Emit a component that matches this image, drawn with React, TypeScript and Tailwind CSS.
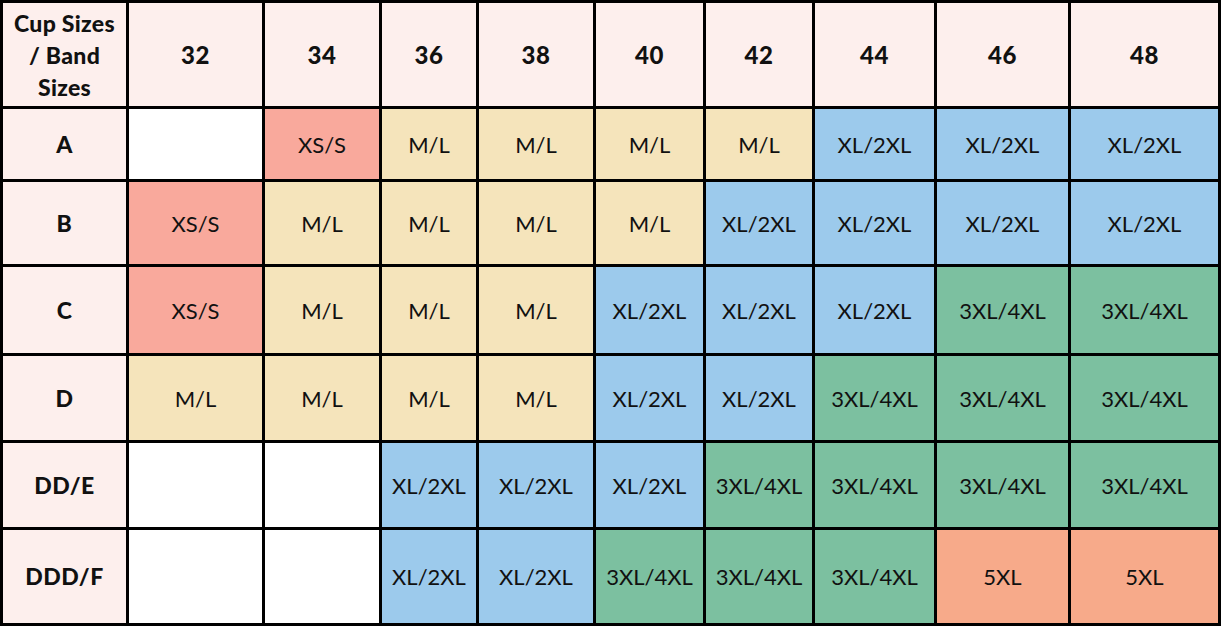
import React from "react";

type C = "w" | "r" | "y" | "b" | "g" | "o";

const bg: Record<C, string> = {
  w: "bg-white",
  r: "bg-[#f9a99c]",
  y: "bg-[#f5e4bb]",
  b: "bg-[#9ccaec]",
  g: "bg-[#7cc0a0]",
  o: "bg-[#f7aa8a]",
};

const bands = ["32", "34", "36", "38", "40", "42", "44", "46", "48"];

const rows: { cup: string; cells: [C, string][] }[] = [
  {
    cup: "A",
    cells: [
      ["w", ""], ["r", "XS/S"], ["y", "M/L"], ["y", "M/L"], ["y", "M/L"], ["y", "M/L"],
      ["b", "XL/2XL"], ["b", "XL/2XL"], ["b", "XL/2XL"],
    ],
  },
  {
    cup: "B",
    cells: [
      ["r", "XS/S"], ["y", "M/L"], ["y", "M/L"], ["y", "M/L"], ["y", "M/L"], ["b", "XL/2XL"],
      ["b", "XL/2XL"], ["b", "XL/2XL"], ["b", "XL/2XL"],
    ],
  },
  {
    cup: "C",
    cells: [
      ["r", "XS/S"], ["y", "M/L"], ["y", "M/L"], ["y", "M/L"], ["b", "XL/2XL"], ["b", "XL/2XL"],
      ["b", "XL/2XL"], ["g", "3XL/4XL"], ["g", "3XL/4XL"],
    ],
  },
  {
    cup: "D",
    cells: [
      ["y", "M/L"], ["y", "M/L"], ["y", "M/L"], ["y", "M/L"], ["b", "XL/2XL"], ["b", "XL/2XL"],
      ["g", "3XL/4XL"], ["g", "3XL/4XL"], ["g", "3XL/4XL"],
    ],
  },
  {
    cup: "DD/E",
    cells: [
      ["w", ""], ["w", ""], ["b", "XL/2XL"], ["b", "XL/2XL"], ["b", "XL/2XL"], ["g", "3XL/4XL"],
      ["g", "3XL/4XL"], ["g", "3XL/4XL"], ["g", "3XL/4XL"],
    ],
  },
  {
    cup: "DDD/F",
    cells: [
      ["w", ""], ["w", ""], ["b", "XL/2XL"], ["b", "XL/2XL"], ["g", "3XL/4XL"], ["g", "3XL/4XL"],
      ["g", "3XL/4XL"], ["o", "5XL"], ["o", "5XL"],
    ],
  },
];

export default function App() {
  return (
    <div
      className="w-[1221px] h-[626px] bg-black p-[3px] overflow-hidden"
      style={{ fontFamily: "Lato, 'Noto Sans', sans-serif" }}
    >
      <div className="grid h-full gap-[3px] grid-cols-[123px_133px_114px_94px_114px_107px_106px_119px_131px_147px] grid-rows-[103px_70px_82px_86px_84px_84px_93px] text-[#111111]">
        <div className="bg-[#fdefed] flex items-center justify-center text-center font-black text-[23px] leading-[32px] tracking-[0.3px]">
          <span>
            Cup Sizes
            <br />/ Band
            <br />Sizes
          </span>
        </div>
        {bands.map((b) => (
          <div
            key={b}
            className="bg-[#fdefed] flex items-center justify-center font-black text-[24px] tracking-[0.5px]"
          >
            {b}
          </div>
        ))}
        {rows.map((r) => (
          <React.Fragment key={r.cup}>
            <div className="bg-[#fdefed] flex items-center justify-center font-black text-[23px] tracking-[0.5px]">
              {r.cup}
            </div>
            {r.cells.map(([c, t], i) => (
              <div
                key={i}
                className={`${bg[c]} flex items-center justify-center text-[22px] font-normal whitespace-nowrap`}
              >
                {t}
              </div>
            ))}
          </React.Fragment>
        ))}
      </div>
    </div>
  );
}
